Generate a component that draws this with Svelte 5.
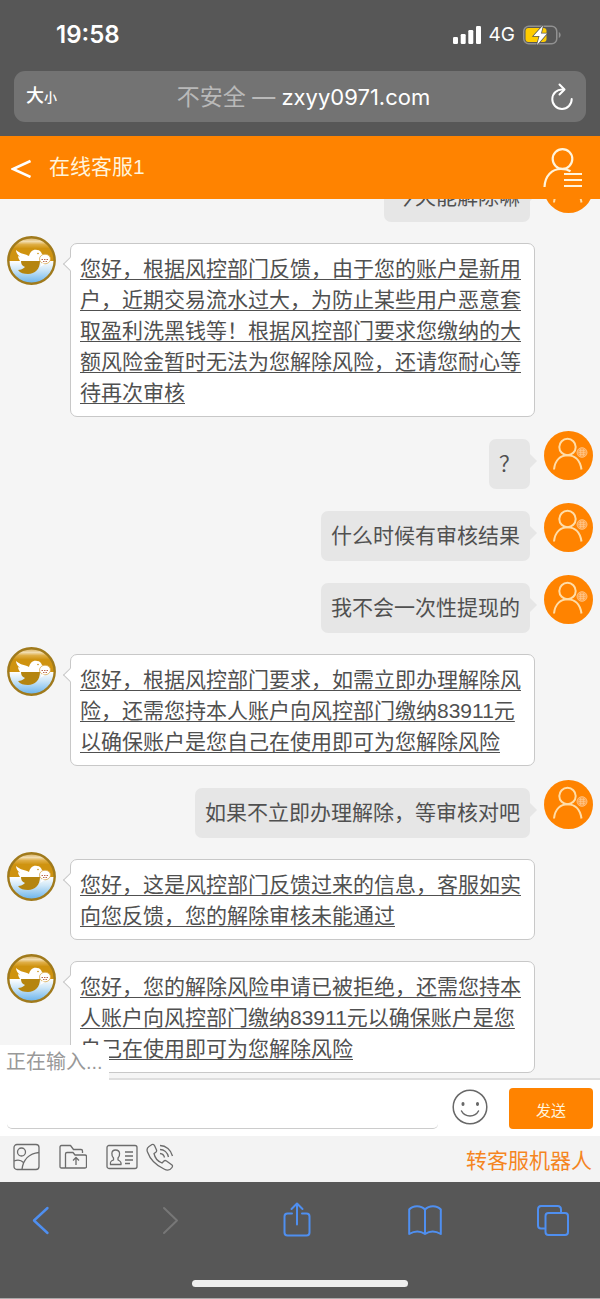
<script lang="ts">
	type Message = { id: number; from: 'agent' | 'user'; text: string };

	const messages: Message[] = [
		{ id: 1, from: 'user', text: '今天能解除嘛' },
		{
			id: 2,
			from: 'agent',
			text: '您好，根据风控部门反馈，由于您的账户是新用户，近期交易流水过大，为防止某些用户恶意套取盈利洗黑钱等！根据风控部门要求您缴纳的大额风险金暂时无法为您解除风险，还请您耐心等待再次审核'
		},
		{ id: 3, from: 'user', text: '？' },
		{ id: 4, from: 'user', text: '什么时候有审核结果' },
		{ id: 5, from: 'user', text: '我不会一次性提现的' },
		{
			id: 6,
			from: 'agent',
			text: '您好，根据风控部门要求，如需立即办理解除风险，还需您持本人账户向风控部门缴纳83911元以确保账户是您自己在使用即可为您解除风险'
		},
		{ id: 7, from: 'user', text: '如果不立即办理解除，等审核对吧' },
		{
			id: 8,
			from: 'agent',
			text: '您好，这是风控部门反馈过来的信息，客服如实向您反馈，您的解除审核未能通过'
		},
		{
			id: 9,
			from: 'agent',
			text: '您好，您的解除风险申请已被拒绝，还需您持本人账户向风控部门缴纳83911元以确保账户是您自己在使用即可为您解除风险'
		}
	];

	let draft = $state('');
</script>

{#snippet agentAvatar()}
	<svg class="avatar" viewBox="0 0 49 49" aria-hidden="true">
		<defs>
			<linearGradient id="sky" x1="0" y1="0" x2="0" y2="1">
				<stop offset="0" stop-color="#c99a3c" />
				<stop offset="0.22" stop-color="#f1dcae" />
				<stop offset="0.34" stop-color="#dfae45" />
				<stop offset="0.5" stop-color="#cf9310" />
			</linearGradient>
			<linearGradient id="sea" x1="0" y1="0" x2="0" y2="1">
				<stop offset="0" stop-color="#fff" />
				<stop offset="0.35" stop-color="#cfe7f7" />
				<stop offset="0.9" stop-color="#6fb6ec" />
			</linearGradient>
			<clipPath id="disc"><circle cx="24.5" cy="24.5" r="23" /></clipPath>
		</defs>
		<g clip-path="url(#disc)">
			<path d="M0 0h49v25H0z" fill="url(#sky)" />
			<path d="M0 25h49v24H0z" fill="url(#sea)" />
			<path d="M14 25h19c0 8-5 13-12 13-4 0-8-1-10-4 3 0 5-1 7-3-3-1-4-3-4-6z" fill="#b5850f" />
			<path
				d="M9 14c4 4 10 4 13 6 1-4 4-7 8-6 3 0 4 2 5 4l2 2c-2 0-3 1-3 2 0 2-1 3-2 3H13c-1-2-2-3-2-5l2 1c-2-2-4-4-4-7z"
				fill="#fff"
			/>
			<circle cx="31" cy="17.5" r="0.8" fill="#c99212" />
			<ellipse cx="38" cy="23" rx="5.5" ry="4.8" fill="#fff" stroke="#d9a84a" stroke-width="0.8" />
			<path d="M35 27l-2 4 5-3z" fill="#fff" />
			<path d="M34.500 23.500h7M36 25.500h4" stroke="#b86a50" stroke-width="1.2" stroke-dasharray="1.5 1" />
		</g>
		<circle cx="24.5" cy="24.5" r="23.2" fill="none" stroke="#a07a1c" stroke-width="2.400" />
	</svg>
{/snippet}

{#snippet userAvatar()}
	<svg class="avatar" viewBox="0 0 49 49" fill="none" stroke="#ffdda8" aria-hidden="true">
		<circle cx="24.5" cy="24.5" r="24.5" fill="#ff8300" stroke="none" />
		<circle cx="23.5" cy="16" r="8.2" stroke-width="2" />
		<path d="M10 38.500C11 28.500 17 24.200 23.500 24.200S36 28.500 37.500 38.500" stroke-width="2" />
		<ellipse cx="38" cy="21.500" rx="5" ry="4.800" fill="#ffa64d" stroke="#ffc07c" />
		<path d="M35 19.500h6M34.500 21.500h7M35 23.500h6M36.500 18v7M39.500 18v7" stroke="#ffc98f" stroke-width="0.6" />
	</svg>
{/snippet}

<div class="page">
	<div class="browser-top">
		<div class="status-bar">
			<span class="clock">19:58</span>
			<div class="status-icons">
				<svg width="28" height="18" viewBox="0 0 28 18" fill="#fff" aria-hidden="true">
					<rect x="0" y="11" width="5" height="7" rx="1.200" />
					<rect x="7.700" y="8" width="5" height="10" rx="1.200" />
					<rect x="15.300" y="4" width="5" height="14" rx="1.200" />
					<rect x="23" y="0" width="5" height="18" rx="1.200" />
				</svg>
				<span class="network">4G</span>
				<svg width="38" height="20" viewBox="0 0 38 20" aria-hidden="true">
					<rect x="0.750" y="1.250" width="33" height="17.500" rx="5" fill="none" stroke="#919191" stroke-width="1.500" />
					<path d="M35.800 7v6c2.400-1 2.400-5 0-6z" fill="#919191" />
					<rect x="2.500" y="3" width="21" height="14" rx="3" fill="#fc0" />
					<path d="M20 0.500L10.500 11h6l-2.500 9L24 8.500h-6z" fill="#fff" stroke="#575757" stroke-width="1.500" paint-order="stroke" />
				</svg>
			</div>
		</div>
		<div class="address-bar">
			<button class="text-size" aria-label="大小"><span>大</span><small>小</small></button>
			<div class="address"><span class="insecure">不安全 —</span> zxyy0971.com</div>
			<button class="reload" aria-label="刷新">
				<svg width="24" height="28" viewBox="0 0 24 28" fill="none" stroke="#fff" stroke-width="2" stroke-linecap="round" stroke-linejoin="round">
					<path d="M12.500 6.500A9.700 9.700 0 1 0 21.700 16" />
					<path d="M9.500 1.500l5 5-5 5" />
				</svg>
			</button>
		</div>
	</div>

	<header class="chat-header">
		<button class="back" aria-label="返回">
			<svg width="20" height="20" viewBox="0 0 20 20" fill="none" stroke="#fff" stroke-width="2.500">
				<path d="M19.500 3L2 11l17.500 8" />
			</svg>
		</button>
		<h1>在线客服1</h1>
		<button class="profile" aria-label="个人资料">
			<svg width="40" height="40" viewBox="0 0 40 40" fill="none" stroke="#fff4dc" stroke-width="2.200">
				<circle cx="19.500" cy="11" r="9.800" />
				<path d="M1.500 39C2 27.500 9 21 18 21c4 0 7 .700 9.500 2.300" />
				<path d="M21 26h18M21 32h18M21 38h18" />
			</svg>
		</button>
	</header>

	<main class="messages">
		{#each messages as message (message.id)}
			<div class="row {message.from}">
				{#if message.from === 'agent'}
					{@render agentAvatar()}
				{:else}
					{@render userAvatar()}
				{/if}
				<p class="bubble">{message.text}</p>
			</div>
		{/each}
	</main>

	<form class="composer" onsubmit={(e) => e.preventDefault()}>
		<span class="typing">正在输入...</span>
		<input class="draft" type="text" aria-label="消息" bind:value={draft} />
		<button class="emoji" type="button" aria-label="表情">
			<svg width="36" height="36" viewBox="0 0 36 36" fill="none" stroke="#686868" stroke-width="1.500" stroke-linecap="round">
				<circle cx="18" cy="18" r="16.800" />
				<path d="M9.500 22c3.500 6.500 13.500 6.500 17 0" />
				<ellipse cx="11" cy="15" rx="0.800" ry="1.200" fill="#686868" />
				<ellipse cx="25.500" cy="15" rx="0.800" ry="1.200" fill="#686868" />
			</svg>
		</button>
		<button class="send" type="submit">发送</button>
	</form>

	<div class="tools">
		<button aria-label="图片">
			<svg width="27" height="28" viewBox="0 0 27 28">
				<rect x="1" y="1.500" width="25" height="25" rx="3" />
				<circle cx="8.500" cy="9" r="4" />
				<path d="M9 26.500C10 17 16 10.500 26 9.500M1 18c4-1.500 7-1 9.500 1.500" />
			</svg>
		</button>
		<button aria-label="文件">
			<svg width="28" height="28" viewBox="0 0 28 28">
				<path d="M6 25H2.500Q1 25 1 23.500V4q0-1.500 1.500-1.500h9l3 4H22q1.500 0 1.500 1.500v2" />
				<path d="M6.500 25V11q0-1.500 1.500-1.500h6l2 2.500h10q1.500 0 1.500 1.500v10q0 1.500-1.500 1.500z" />
				<path d="M17 22v-7.500M14 17.500l3-3 3 3" />
			</svg>
		</button>
		<button aria-label="名片">
			<svg width="32" height="28" viewBox="0 0 32 28">
				<rect x="1" y="2.500" width="30" height="23" rx="2" />
				<path d="M9.500 7c-5 0-4 6-2 8v2c-3 1-3.500 2-3 4.500h10.500c.500-2.500-.500-3.500-3-4.500v-2c2-2 3-8-2.500-8z" />
				<path d="M19 9h8M19 13h8M19 17h8M19 20.500h5" />
			</svg>
		</button>
		<button aria-label="电话">
			<svg width="28" height="28" viewBox="0 0 28 28">
				<path d="M3 3.500L6 1.500q1.500-.500 2.500 1L10.500 7q.500 1.500-1 2.500l-1.500 1c1 5 4 8 8 9.500l2-2q1-1 2.500 0l5.500 4q1 1 0 2.500c-2 3-4.500 3.500-8 1.500C9.500 22 4 16 1.500 9 .500 6.500 1.500 4.500 3 3.500z" />
				<path d="M14 2.500c6 0 11 4.500 12.500 10.500M14 6.500c4 0 7.500 3 8.500 7.500M14 10.500c2 .200 4 1.800 4.500 4" />
			</svg>
		</button>
		<a href="#robot">转客服机器人</a>
	</div>

	<footer class="browser-bottom">
		<nav>
			<button aria-label="后退">
				<svg width="34" height="36" viewBox="0 0 34 36"><path d="M23.500 6L10 18.500 23.500 31" stroke-width="2.400" /></svg>
			</button>
			<button class="disabled" aria-label="前进" disabled>
				<svg width="34" height="36" viewBox="0 0 34 36"><path d="M12 6l13 12.500L12 31" /></svg>
			</button>
			<button aria-label="分享">
				<svg width="34" height="36" viewBox="0 0 34 36">
					<path d="M12 11.500H7.500Q4.500 11.500 4.500 14.500v16q0 3 3 3h19q3 0 3-3v-16q0-3-3-3H22" />
					<path d="M17 22.500V2M11.500 7L17 1.500 22.500 7" />
				</svg>
			</button>
			<button aria-label="书签">
				<svg width="34" height="36" viewBox="0 0 34 36">
					<path d="M17 7.500C13 3 5 3 1.200 7.500V32C6 29 12 28.500 17 32c5-3.500 11-3 15.800 0V7.500C29 3 21 3 17 7.500zV32" />
				</svg>
			</button>
			<button aria-label="标签页">
				<svg width="34" height="36" viewBox="0 0 34 36">
					<path d="M9 26.500H5q-3 0-3-3V7.500q0-3.500 3-3.500h16.500q3.500 0 3.500 3.500V11" />
					<rect x="9.500" y="11" width="22.500" height="22" rx="3" />
				</svg>
			</button>
		</nav>
		<div class="home-indicator"></div>
	</footer>
</div>

<style>
	:global(body) {
		margin: 0;
	}

	.page {
		display: flex;
		flex-direction: column;
		height: 100vh;
		background: #f5f5f5;
		color: #505050;
		font-family: 'Liberation Sans', 'Noto Sans CJK SC', sans-serif;
		font-size: 21px;
		line-height: 31px;
	}

	.page > * {
		box-sizing: border-box;
		flex-shrink: 0;
	}

	button {
		display: flex;
		align-items: center;
		justify-content: center;
		padding: 0;
		border: 0;
		background: none;
		color: inherit;
		font: inherit;
		cursor: pointer;
	}

	svg {
		display: block;
		flex-shrink: 0;
	}

	.browser-top {
		padding: 0 14px 14px;
		background: #575757;
		color: #fff;
		font-family: Inter, 'Noto Sans CJK SC', sans-serif;
	}

	.status-bar {
		display: flex;
		align-items: center;
		justify-content: space-between;
		box-sizing: border-box;
		height: 71px;
		padding: 0 25px 2px 42px;
	}

	.clock {
		font-size: 24px;
		font-weight: 600;
	}

	.status-icons {
		display: flex;
		align-items: center;
		gap: 8px;
	}

	.network {
		font-size: 19px;
	}

	.address-bar {
		display: flex;
		align-items: center;
		justify-content: space-between;
		height: 51px;
		padding: 0 12px;
		border-radius: 11px;
		background: #737373;
	}

	.text-size {
		align-items: baseline;
		font-size: 18px;
		font-weight: 500;
	}

	.text-size small {
		font-size: 13px;
	}

	.address {
		padding-top: 2px;
		font-size: 22px;
	}

	.insecure {
		color: #b9b9b9;
		font-size: 23px;
	}

	.chat-header {
		display: flex;
		align-items: center;
		gap: 18px;
		height: 63px;
		padding: 0 17px 0 11px;
		background: #ff8300;
		color: #fff4dc;
	}

	.chat-header h1 {
		flex: 1;
		margin: 0;
		padding-bottom: 2px;
		font-size: 21px;
		font-weight: 400;
	}

	.messages {
		display: flex;
		flex: 1;
		flex-direction: column;
		justify-content: flex-end;
		gap: 14px;
		min-height: 0;
		padding-bottom: 5px;
		overflow: hidden;
	}

	.row {
		display: flex;
		flex-shrink: 0;
		align-items: flex-start;
		gap: 14px;
		padding: 0 7px;
	}

	.row.user {
		flex-direction: row-reverse;
	}

	.row.agent {
		padding-right: 65px;
	}

	.avatar {
		width: 49px;
		height: 49px;
	}

	.bubble {
		position: relative;
		margin: 7px 0 0;
		border-radius: 7px;
	}

	.agent .bubble {
		flex: 1;
		padding: 9px 12px 8px 9px;
		border: 1px solid #c8c8c8;
		background: #fff;
		text-decoration: underline;
		text-decoration-skip-ink: none;
		text-decoration-thickness: 1px;
		text-underline-offset: 3px;
	}

	.user .bubble {
		margin-top: 8px;
		padding: 9px 10px 10px;
		background: #e6e6e6;
	}

	.bubble::before {
		position: absolute;
		content: '';
	}

	.agent .bubble::before {
		top: 15px;
		left: -6px;
		width: 9px;
		height: 9px;
		border-bottom: 1px solid #c8c8c8;
		border-left: 1px solid #c8c8c8;
		background: #fff;
		transform: rotate(45deg);
	}

	.user .bubble::before {
		top: 15px;
		right: -7px;
		border-top: 7px solid transparent;
		border-bottom: 7px solid transparent;
		border-left: 7px solid #e6e6e6;
	}

	.composer {
		position: relative;
		display: flex;
		align-items: center;
		padding: 8px 7px 7px;
		border-top: 2px solid #dedede;
		background: #fff;
	}

	.typing {
		position: absolute;
		bottom: 100%;
		left: 0;
		margin-bottom: -2px;
		padding: 2px 6px 4px;
		background: #fff;
		color: #999;
		font-size: 20px;
	}

	.draft {
		flex: 1;
		min-width: 0;
		height: 41px;
		box-sizing: border-box;
		padding: 0 8px;
		border: 0;
		border-bottom: 1px solid #ccc;
		border-radius: 5px;
		background: #fff;
		font: inherit;
		outline: none;
	}

	.emoji {
		margin: 0 21px 4px 14px;
	}

	.send {
		width: 84px;
		height: 41px;
		padding-top: 3px;
		border-radius: 4px;
		background: #ff8300;
		color: #fff4dc;
		font-size: 15px;
	}

	.tools {
		display: flex;
		align-items: center;
		height: 46px;
		padding: 0 8px 0 13px;
		background: #f3f3f3;
	}

	.tools button {
		margin: 0 19px 4px 0;
	}

	.tools button:nth-of-type(3) {
		margin-right: 8px;
	}

	.tools svg {
		fill: none;
		stroke: #6c6c6c;
		stroke-width: 1.3;
		stroke-linejoin: round;
	}

	.tools a {
		margin-left: auto;
		padding-top: 3px;
		color: #f5851f;
		text-decoration: none;
	}

	.browser-bottom {
		display: flex;
		flex-direction: column;
		align-items: center;
		justify-content: space-between;
		height: 117px;
		padding: 20px 0 11px;
		border-bottom: 1px solid #aaa;
		background: #575757;
	}

	.browser-bottom nav {
		display: flex;
		align-self: stretch;
		justify-content: space-between;
		padding: 0 30px 0 24px;
	}

	.browser-bottom svg {
		fill: none;
		stroke: #4f8ff0;
		stroke-width: 2;
		stroke-linecap: round;
		stroke-linejoin: round;
	}

	.browser-bottom .disabled svg {
		stroke: #777;
	}

	.home-indicator {
		width: 36%;
		height: 7px;
		border-radius: 4px;
		background: #eee;
	}
</style>
